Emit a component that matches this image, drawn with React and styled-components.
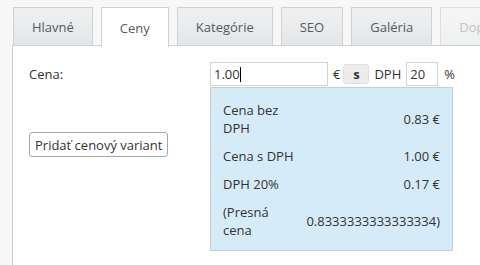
import styled, { createGlobalStyle } from 'styled-components';

const Global = createGlobalStyle`
  html, body {
    margin: 0;
    padding: 0;
    background: #f7f7f7;
    font-family: 'Open Sans', 'Liberation Sans', sans-serif;
    font-size: 13px;
    color: #333;
  }
`;

const Page = styled.div`
  width: 480px;
  height: 265px;
  overflow: hidden;
  padding: 7px 0 0 12px;
  box-sizing: border-box;
`;

const Tabs = styled.ul`
  display: flex;
  gap: 8px;
  margin: 0;
  padding: 0 0 0 1px;
  list-style: none;
  height: 39px;
  position: relative;
  z-index: 1;
`;

const Tab = styled.li`
  flex: none;
  box-sizing: border-box;
  height: ${(p) => (p.$active ? '40px' : '39px')};
  padding: 0 18px;
  display: flex;
  align-items: center;
  border: 1px solid ${(p) => (p.$disabled ? '#dedede' : '#cfd1d3')};
  border-bottom: ${(p) => (p.$active ? 'none' : '1px solid #cfd1d3')};
  background: ${(p) =>
    p.$active
      ? '#fff'
      : p.$disabled
      ? 'linear-gradient(#f6f6f6, #eef0f1)'
      : 'linear-gradient(#eff0f1, #e3e6e9)'};
  color: ${(p) => (p.$disabled ? '#c3c5c8' : '#56595e')};
  font-size: 13px;
  white-space: nowrap;
`;

const Panel = styled.div`
  background: #fff;
  border-left: 1px solid #ccc;
  border-top: 1px solid #cfd1d3;
  margin-top: -1px;
  height: 230px;
  padding: 16px 0 0 16px;
  display: grid;
  grid-template-columns: 181px auto;
  align-items: start;
`;

const LeftCol = styled.div`
  display: flex;
  flex-direction: column;
  align-items: flex-start;
`;

const Label = styled.div`
  line-height: 24px;
  color: #333;
`;

const AddButton = styled.button`
  margin-top: 46px;
  height: 25px;
  padding: 0 5px;
  font: inherit;
  font-size: 13px;
  color: #333;
  background: #fff;
  border: 1px solid #a3a8b1;
  border-radius: 3px;
`;

const RightCol = styled.div`
  display: flex;
  flex-direction: column;
`;

const PriceRow = styled.div`
  display: flex;
  align-items: center;
  height: 24px;
`;

const InputWrap = styled.span`
  position: relative;
  display: flex;
`;

const Caret = styled.span`
  position: absolute;
  left: 30px;
  top: 5px;
  width: 1px;
  height: 15px;
  background: #000;
`;

const Input = styled.input`
  box-sizing: border-box;
  width: ${(p) => p.$w}px;
  height: 24px;
  border: 1px solid #d3d3d3;
  padding: 0 3px;
  font: inherit;
  font-size: 13px;
  color: #333;
  outline: none;
  caret-color: transparent;
`;

const Unit = styled.span`
  margin: ${(p) => p.$m};
  color: #333;
`;

const SButton = styled.span`
  width: 26px;
  height: 20px;
  box-sizing: border-box;
  display: flex;
  align-items: center;
  justify-content: center;
  background: #ececec;
  border: 1px solid #e0e0e0;
  border-radius: 3px;
  font-weight: bold;
  color: #333;
  margin-left: 3px;
`;

const InfoBox = styled.div`
  margin-top: 1px;
  width: 243px;
  box-sizing: border-box;
  background: #d6ebf8;
  border: 1px solid #c8cdd0;
  padding: 8px 7px 6px 7px;
`;

const Table = styled.table`
  width: 100%;
  border-collapse: collapse;
  line-height: 18px;
`;

const Cell = styled.td`
  padding: 5px;
  vertical-align: middle;
  text-align: ${(p) => (p.$right ? 'right' : 'left')};
  width: ${(p) => (p.$right ? 'auto' : '75px')};
  color: #333;
`;

const rows = [
  ['Cena bez DPH', '0.83 €'],
  ['Cena s DPH', '1.00 €'],
  ['DPH 20%', '0.17 €'],
  ['(Presná cena', '0.8333333333333334)'],
];

export default function App() {
  return (
    <>
      <Global />
      <Page>
        <Tabs>
          <Tab>Hlavné</Tab>
          <Tab $active>Ceny</Tab>
          <Tab>Kategórie</Tab>
          <Tab>SEO</Tab>
          <Tab>Galéria</Tab>
          <Tab $disabled>Doplnkové</Tab>
        </Tabs>
        <Panel>
          <LeftCol>
            <Label>Cena:</Label>
            <AddButton>Pridať cenový variant</AddButton>
          </LeftCol>
          <RightCol>
            <PriceRow>
              <InputWrap>
                <Input $w={118} defaultValue="1.00" />
                <Caret />
              </InputWrap>
              <Unit $m="0 0 0 5px">€</Unit>
              <SButton>s</SButton>
              <Unit $m="0 5px">DPH</Unit>
              <Input $w={32} defaultValue="20" />
              <Unit $m="0 0 0 6px">%</Unit>
            </PriceRow>
            <InfoBox>
              <Table>
                <tbody>
                  {rows.map(([k, v]) => (
                    <tr key={k}>
                      <Cell>{k}</Cell>
                      <Cell $right>{v}</Cell>
                    </tr>
                  ))}
                </tbody>
              </Table>
            </InfoBox>
          </RightCol>
        </Panel>
      </Page>
    </>
  );
}
